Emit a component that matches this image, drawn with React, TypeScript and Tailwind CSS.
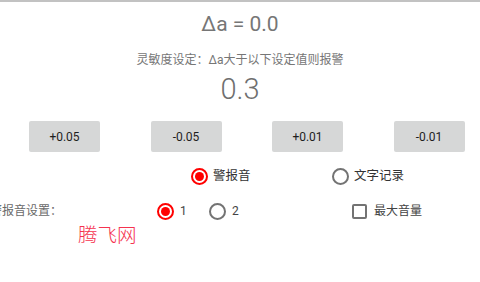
import React from "react";

const font = { fontFamily: "Roboto, 'Noto Sans CJK SC', sans-serif" } as React.CSSProperties;

function Radio({ checked }: { checked: boolean }) {
  return checked ? (
    <div className="w-[17px] h-[17px] rounded-full border-2 border-[#ff0000] flex items-center justify-center shrink-0">
      <div className="w-[9px] h-[9px] rounded-full bg-[#ff0000]" />
    </div>
  ) : (
    <div className="w-[17px] h-[17px] rounded-full border-2 border-[#737373] shrink-0" />
  );
}

export default function App() {
  const buttons = ["+0.05", "-0.05", "+0.01", "-0.01"];
  return (
    <div className="w-[480px] h-[282px] bg-white overflow-hidden font-['Roboto','Noto_Sans_CJK_SC',sans-serif]" style={font}>
      <div className="h-[2px] bg-[#c2c2c2]" />
      <div className="h-[45px] flex items-center justify-center text-[21px] text-[#767676]">Δa = 0.0</div>
      <div className="h-[26px] flex items-center justify-center text-[12px] text-[#767676]">灵敏度设定：Δa大于以下设定值则报警</div>
      <div className="h-[34px] flex items-center justify-center text-[29px] font-light text-[#6f6f6f]">0.3</div>
      <div className="mt-[14px] h-[31px] flex pl-[29px] gap-[50.5px]">
        {buttons.map((b) => (
          <div key={b} className="w-[71px] h-[31px] bg-[#d6d7d7] rounded-[2px] flex items-center justify-center text-[12px] font-normal text-[#1e1e1e]">
            {b}
          </div>
        ))}
      </div>
      <div className="h-[49px] flex items-center pl-[191px]">
        <div className="w-[141px] flex items-center gap-[5px]">
          <Radio checked />
          <span className="text-[12.5px] text-[#333333]">警报音</span>
        </div>
        <div className="flex items-center gap-[5px]">
          <Radio checked={false} />
          <span className="text-[12.5px] text-[#333333]">文字记录</span>
        </div>
      </div>
      <div className="h-[20px] flex items-center">
        <span className="ml-[-10px] w-[167px] text-[12px] text-[#6a6a6a]">警报音设置：</span>
        <div className="w-[52px] flex items-center gap-[6px]">
          <Radio checked />
          <span className="text-[12px] text-[#444444]">1</span>
        </div>
        <div className="w-[143px] flex items-center gap-[6px]">
          <Radio checked={false} />
          <span className="text-[12px] text-[#444444]">2</span>
        </div>
        <div className="flex items-center gap-[7px]">
          <div className="w-[15px] h-[15px] border-2 border-[#737373] rounded-[2px]" />
          <span className="text-[12px] text-[#444444]">最大音量</span>
        </div>
      </div>
      <div className="h-[30px] flex items-center pl-[78px] text-[19.5px] font-light text-[#f5334f] leading-none">腾飞网</div>
    </div>
  );
}
